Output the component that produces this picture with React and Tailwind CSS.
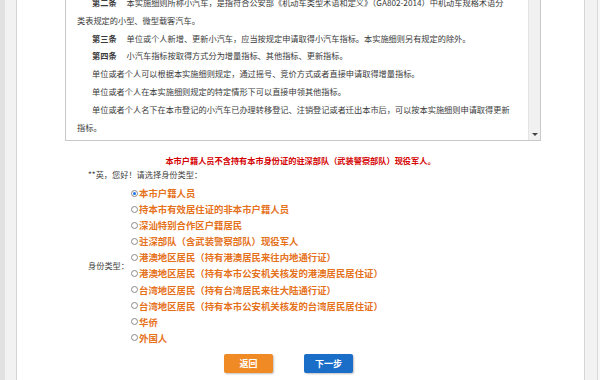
import { useState } from 'react';

const FONT = { fontFamily: '"Microsoft YaHei", "Noto Sans CJK SC", "Noto Sans", sans-serif' };

const lines = [
  { indent: true, head: '第二条', text: '本实施细则所称小汽车，是指符合公安部《机动车类型术语和定义》（GA802-2014）中机动车规格术语分' },
  { indent: false, text: '类表规定的小型、微型载客汽车。' },
  { indent: true, head: '第三条', text: '单位或个人新增、更新小汽车，应当按规定申请取得小汽车指标。本实施细则另有规定的除外。' },
  { indent: true, head: '第四条', text: '小汽车指标按取得方式分为增量指标、其他指标、更新指标。' },
  { indent: true, text: '单位或者个人可以根据本实施细则规定，通过摇号、竞价方式或者直接申请取得增量指标。' },
  { indent: true, text: '单位或者个人在本实施细则规定的特定情形下可以直接申领其他指标。' },
  { indent: true, text: '单位或者个人名下在本市登记的小汽车已办理转移登记、注销登记或者迁出本市后，可以按本实施细则申请取得更新' },
  { indent: false, text: '指标。' },
  { indent: true, head: '第五条', text: '小汽车增量指标实行摇号和竞价方式配置，摇号和竞价的比例' },
];

const options = [
  '本市户籍人员',
  '持本市有效居住证的非本市户籍人员',
  '深汕特别合作区户籍居民',
  '驻深部队（含武装警察部队）现役军人',
  '港澳地区居民（持有港澳居民来往内地通行证）',
  '港澳地区居民（持有本市公安机关核发的港澳居民居住证）',
  '台湾地区居民（持有台湾居民来往大陆通行证）',
  '台湾地区居民（持有本市公安机关核发的台湾居民居住证）',
  '华侨',
  '外国人',
];

export default function App() {
  const [picked, setPicked] = useState(0);

  return (
    <div className="w-[600px] h-[380px] overflow-hidden flex bg-white" style={FONT}>
      {/* left frame */}
      <div className="w-[5px] bg-[#e1e1e1]" />
      <div className="w-[11px] bg-[#f2f2f2]" />
      <div className="w-px bg-[#d4d4d4]" />

      {/* main */}
      <div className="w-[567px] bg-white flex flex-col">
        {/* agreement box */}
        <div className="ml-[48px] w-[476px] h-[141px] border border-t-0 border-[#c9c9c9] flex overflow-hidden">
          <div className="flex-1 pl-[11px] -mt-[6px] text-[8.2px] leading-[17.8px] text-[#3a3a3a]">
            {lines.map((l, i) => (
              <div key={i} className={`whitespace-nowrap ${l.indent ? 'pl-[15px]' : ''}`}>
                {l.head && <span className="font-bold mr-[10px]">{l.head}</span>}
                {l.text}
              </div>
            ))}
          </div>
          <div className="w-[12px] bg-[#f1f1f1] border-l border-[#e4e4e4] flex flex-col justify-end items-center pb-[4px]">
            <div className="w-0 h-0 border-l-[3px] border-r-[3px] border-t-[3px] border-l-transparent border-r-transparent border-t-[#444]" />
          </div>
        </div>

        {/* notice */}
        <div className="mt-[12px] text-center text-[8.2px] leading-[14px] font-bold text-[#d40000]">
          本市户籍人员不含持有本市身份证的驻深部队（武装警察部队）现役军人。
        </div>
        <div className="ml-[71px] text-[8.2px] leading-[14px] text-[#444]">**英，您好！请选择身份类型：</div>

        {/* identity table */}
        <div className="mt-[4px] ml-[71px] flex items-center">
          <div className="w-[43px] text-[8.2px] text-[#444]">身份类型：</div>
          <div className="flex flex-col">
            {options.map((o, i) => (
              <label key={o} className="h-[16.1px] flex items-center cursor-pointer" onClick={() => setPicked(i)}>
                <span className="w-[7px] h-[7px] rounded-full border border-[#8a8a8a] bg-white flex items-center justify-center mr-px">
                  {picked === i && <span className="w-[3px] h-[3px] rounded-full bg-[#1a73e8]" />}
                </span>
                <span className="text-[9.4px] font-bold text-[#e5711b] whitespace-nowrap">{o}</span>
              </label>
            ))}
          </div>
        </div>

        {/* buttons */}
        <div className="mt-[8px] ml-[207px] flex gap-[31px]">
          <button className="w-[49px] h-[19px] rounded-[2px] bg-[#f08a24] text-white text-[9px] font-bold shadow-[1px_1px_2px_rgba(0,0,0,0.25)]">返回</button>
          <button className="w-[49px] h-[19px] rounded-[2px] bg-[#1b6ec8] text-white text-[9px] font-bold shadow-[1px_1px_2px_rgba(0,0,0,0.25)]">下一步</button>
        </div>
      </div>

      {/* right frame */}
      <div className="w-px bg-[#d6d6d6]" />
      <div className="w-[12px] bg-[#f2f2f2]" />
      <div className="w-px bg-[#dadada]" />
      <div className="flex-1 bg-[#f7f7f7]" />
    </div>
  );
}
